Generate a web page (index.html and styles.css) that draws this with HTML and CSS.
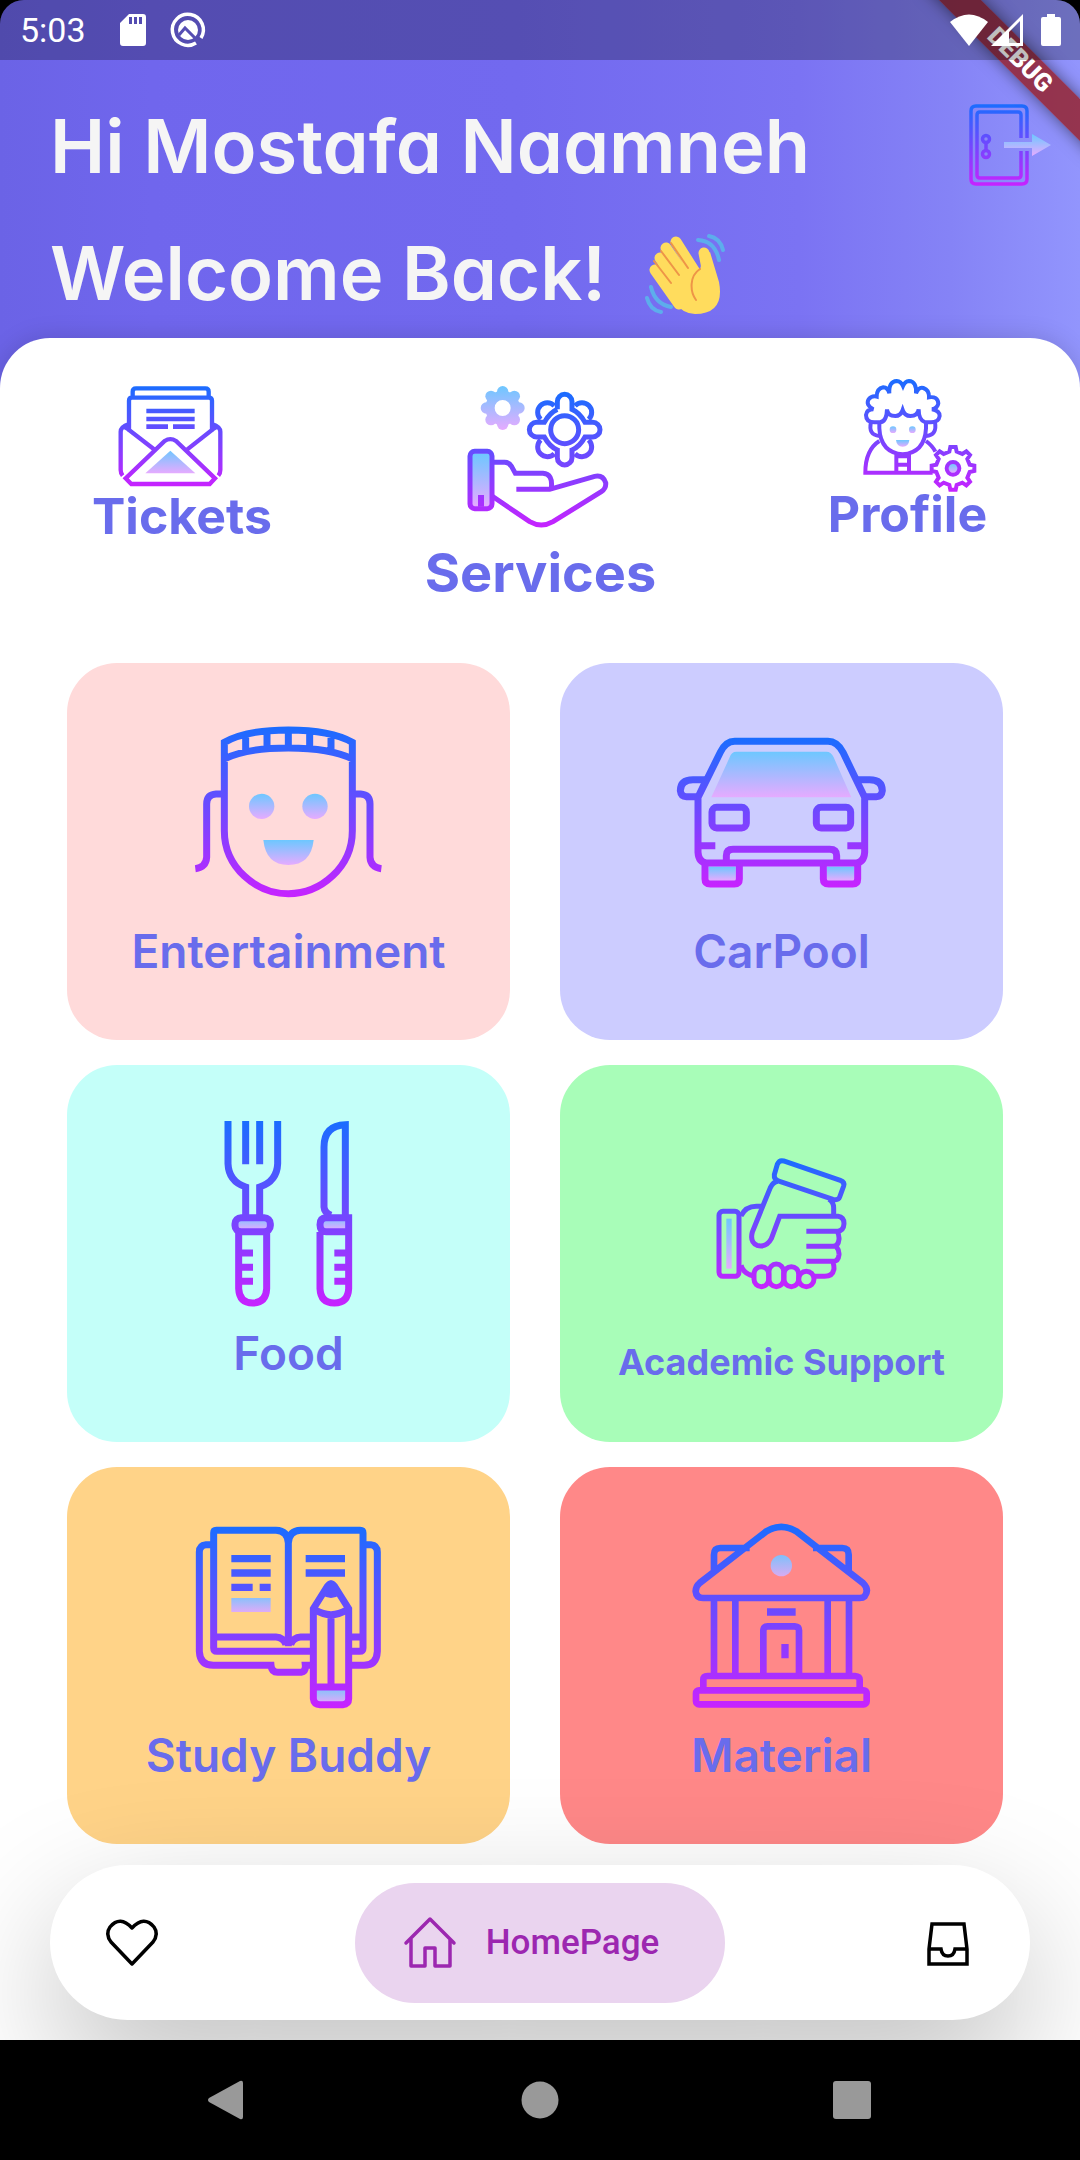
FILE: index.html
```
<!DOCTYPE html>
<html lang="en">
<head>
<meta charset="utf-8">
<meta name="viewport" content="width=device-width, initial-scale=1">
<title>Home</title>
<link rel="stylesheet" href="styles.css">
</head>
<body>
<div class="screen">
  <div class="status-bar">
    <div class="status-group">
      <span class="clock">5:03</span>
      <svg class="sd" width="28" height="34" viewBox="0 0 28 34"><path fill="#fff" fill-rule="evenodd" d="M10 1H24Q27 1 27 4V30Q27 33 24 33H4Q1 33 1 30V10ZM10 4V11H13V4ZM15 4V11H18V4ZM20 4V11H23V4Z"/></svg>
      <svg width="36" height="36" viewBox="0 0 36 36"><path d="M26 31A15.500 15.500 0 1 1 31 26" fill="none" stroke="#fff" stroke-width="3.500"/><circle cx="18" cy="18" r="10" fill="#fff"/><path d="M9 23L15 16L30 31" fill="none" stroke="#564eb3" stroke-width="3"/></svg>
    </div>
    <div class="status-group">
      <svg width="38" height="32" viewBox="0 0 38 32"><path fill="#fff" d="M0 8Q19 -7 38 8L19 32Z"/></svg>
      <svg class="signal" width="32" height="32" viewBox="0 0 32 32"><path fill="#fff" fill-rule="evenodd" d="M0 32L32 0V32ZM18 18V29H29V7Z"/></svg>
      <svg width="20" height="32" viewBox="0 0 20 32"><path fill="#fff" d="M6 0H14V3H18Q20 3 20 5V30Q20 32 18 32H2Q0 32 0 30V5Q0 3 2 3H6Z"/></svg>
    </div>
  </div>
  <div class="debug-banner">DEBUG</div>

  <header class="hero">
    <h1 class="greeting">
      <span class="line">Hi Mostafa Naamneh</span>
      <span class="line">Welcome Back!
        <svg class="wave" width="80" height="80" viewBox="0 0 80 80" aria-hidden="true">
          <g stroke="#ffdc5d" stroke-width="11" stroke-linecap="round"><path d="M31 8L50 38M21 14L44 48M15 24L38 58M10 36L34 70M59 19L64 45"/></g>
          <path fill="#ffdc5d" d="M40 28L55 36L58 22L65 18L74 48Q80 80 50 80Q38 80 28 67L18 46Z"/>
          <g fill="none" stroke="#ee9547" stroke-width="2" stroke-linecap="round"><path d="M26 9L43 34M16 17L34 41M9 27L26 49M55 35C44 42 45 58 51 66"/></g>
          <g fill="none" stroke="#5dadec" stroke-width="4" stroke-linecap="round"><path d="M64 2Q75 4 78 16M53 6Q70 7 74 26M6 53Q10 70 26 73M2 64Q5 76 16 78"/></g>
        </svg>
      </span>
    </h1>
    <button class="logout" aria-label="Log out">
      <svg width="88" height="90" viewBox="0 0 88 90">
        <defs>
          <linearGradient id="door-line" gradientUnits="userSpaceOnUse" x1="0" y1="4" x2="0" y2="86"><stop offset="0" stop-color="#1a6dff"/><stop offset="1" stop-color="#c822ff"/></linearGradient>
          <linearGradient id="door-fill" gradientUnits="userSpaceOnUse" x1="0" y1="34" x2="0" y2="56"><stop offset="0" stop-color="#6dc7ff"/><stop offset="1" stop-color="#e6abff"/></linearGradient>
        </defs>
        <g fill="none" stroke="url(#door-line)" stroke-width="3.500"><path d="M61 38V11Q61 6 56 6H10Q5 6 5 11V79Q5 84 10 84H56Q61 84 61 79V51M55 38V15Q55 12 52 12H14Q11 12 11 15V75Q11 78 14 78H52Q55 78 55 75V51"/><circle cx="20" cy="39" r="3.500"/><circle cx="20" cy="54" r="3.500"/><path d="M20 42V51"/></g>
        <path fill="url(#door-fill)" d="M38 42H66V34L85 45L66 56V48H38Z"/>
      </svg>
    </button>
  </header>

  <main class="sheet">
    <nav class="quick" aria-label="Shortcuts">
      <a class="quick-link" href="#tickets">
        <svg width="177" height="105" viewBox="105 63 531 315">
          <defs>
            <linearGradient id="tk-line" gradientUnits="userSpaceOnUse" x1="0" y1="78" x2="0" y2="380"><stop offset="0" stop-color="#1a6dff"/><stop offset="1" stop-color="#c822ff"/></linearGradient>
            <linearGradient id="tk-fill" gradientUnits="userSpaceOnUse" x1="0" y1="270" x2="0" y2="340"><stop offset="0" stop-color="#6dc7ff"/><stop offset="1" stop-color="#e6abff"/></linearGradient>
          </defs>
          <g fill="none" stroke="url(#tk-line)" stroke-width="13"><path d="M224 112V95Q224 85 234 85H442Q452 85 452 95V112M288 268L213 210V122Q213 113 222 113H452Q462 113 462 122V210L388 268M213 192Q188 200 188 215V330Q188 340 194 347M462 192Q487 200 487 215V330Q487 340 481 347M203 355L320 243Q337 232 354 243L471 355L455 372H220Z"/></g>
          <path fill="url(#tk-line)" d="M265 146H410V160H265ZM265 170H410V184H265ZM265 193H330V207H265ZM345 193H410V207H345ZM213 186L190 203L213 216ZM462 186L485 203L462 216Z"/>
          <path fill="url(#tk-fill)" d="M337 272L412 340H262Z"/>
        </svg>
        <span class="quick-label">Tickets</span>
      </a>
      <a class="quick-link current" href="#services">
        <svg width="230" height="160" viewBox="69 63 690 480">
          <defs>
            <linearGradient id="sv-line" gradientUnits="userSpaceOnUse" x1="0" y1="97" x2="0" y2="505"><stop offset="0" stop-color="#1a6dff"/><stop offset="1" stop-color="#c822ff"/></linearGradient>
            <linearGradient id="sv-gear" gradientUnits="userSpaceOnUse" x1="0" y1="78" x2="0" y2="210"><stop offset="0" stop-color="#6dc7ff"/><stop offset="1" stop-color="#e6abff"/></linearGradient>
            <linearGradient id="sv-cuff" gradientUnits="userSpaceOnUse" x1="0" y1="280" x2="0" y2="440"><stop offset="0" stop-color="#6dc7ff"/><stop offset="1" stop-color="#e6abff"/></linearGradient>
          </defs>
          <circle cx="299" cy="144" r="38" fill="none" stroke="url(#sv-gear)" stroke-width="28"/>
          <g fill="url(#sv-gear)"><circle cx="299" cy="95" r="17"/><circle cx="299" cy="193" r="17"/><circle cx="250" cy="144" r="17"/><circle cx="348" cy="144" r="17"/><circle cx="264" cy="109" r="17"/><circle cx="334" cy="109" r="17"/><circle cx="264" cy="179" r="17"/><circle cx="334" cy="179" r="17"/></g>
          <rect x="207" y="280" width="54" height="160" fill="url(#sv-cuff)"/>
          <g fill="none" stroke="url(#sv-line)" stroke-width="15">
            <circle cx="485" cy="209" r="42"/>
            <path d="M463 148V125A22 22 0 0 1 507 125V148Q530 158 546 187H569A22 22 0 0 1 569 231H546Q530 260 507 270V293A22 22 0 0 1 463 293V270Q440 260 424 231H401A22 22 0 0 1 401 187H424Q440 158 463 148"/>
            <path d="M516 137A29 29 0 1 1 557 178M516 281A29 29 0 1 0 557 240M454 281A29 29 0 1 1 413 240M454 137A29 29 0 1 0 413 178"/>
            <rect x="201" y="274" width="66" height="172" rx="14"/>
            <path stroke-width="18" d="M234 405V440"/>
            <path d="M267 307H305Q318 307 326 320L337 340H420Q450 342 445 384M340 388H440L575 349Q600 344 608 368Q610 385 595 395L450 485Q415 505 380 485L267 408"/>
          </g>
        </svg>
        <span class="quick-label">Services</span>
      </a>
      <a class="quick-link" href="#profile">
        <svg width="163" height="103" viewBox="200 63 489 309">
          <defs>
            <linearGradient id="pf-line" gradientUnits="userSpaceOnUse" x1="0" y1="58" x2="0" y2="397"><stop offset="0" stop-color="#1a6dff"/><stop offset="1" stop-color="#c822ff"/></linearGradient>
            <linearGradient id="pf-fill" x1="0" y1="0" x2="0" y2="1"><stop offset="0" stop-color="#6dc7ff"/><stop offset="1" stop-color="#e6abff"/></linearGradient>
          </defs>
          <g fill="url(#pf-fill)"><circle cx="401" cy="209" r="10"/><circle cx="459" cy="209" r="10"/><path d="M410 240H450Q448 260 430 260Q412 260 410 240Z"/><circle cx="581" cy="325" r="14"/></g>
          <g fill="none" stroke="url(#pf-line)" stroke-width="12">
            <path d="M362 187H345Q320 187 320 165Q322 148 342 148Q318 135 328 118Q338 106 352 110Q352 86 372 82Q385 82 390 100Q388 64 412 63Q425 64 431 78Q437 64 449 63Q472 64 470 100Q478 80 492 84Q510 90 509 112Q535 108 537 130Q535 145 518 148Q541 152 541 168Q538 187 515 187H498Q478 182 478 148Q475 168 453 168Q436 168 430 150Q424 168 408 168Q385 168 383 148Q382 185 362 187Z"/>
            <path d="M360 187V205Q364 278 430 283Q496 278 500 205V187M335 187Q326 225 360 228M527 187Q534 225 500 228M360 243Q318 270 318 338H520M500 243Q520 258 528 275M411 283V338M449 283V338M411 289H449M411 314H449"/>
            <path d="M570 275L573 261H589L592 275 609 282 621 274 632 285 624 297 631 314 645 317V333L631 336 624 353 632 365 621 376 609 368 592 375 589 389H573L570 375 553 368 541 376 530 365 538 353 531 336 517 333V317L531 314 538 297 530 285 541 274 553 282Z"/>
            <circle cx="581" cy="325" r="19"/>
          </g>
        </svg>
        <span class="quick-label">Profile</span>
      </a>
    </nav>

    <section class="cards" aria-label="Services">
      <button class="card entertainment">
        <svg width="213" height="200" viewBox="368 187 639 600">
          <defs>
            <linearGradient id="en-line" gradientUnits="userSpaceOnUse" x1="0" y1="225" x2="0" y2="743"><stop offset="0" stop-color="#1a6dff"/><stop offset="1" stop-color="#c822ff"/></linearGradient>
            <linearGradient id="en-fill" x1="0" y1="0" x2="0" y2="1"><stop offset="0" stop-color="#6dc7ff"/><stop offset="1" stop-color="#e6abff"/></linearGradient>
          </defs>
          <g fill="none" stroke="url(#en-line)" stroke-width="21"><path d="M495 340V275Q560 238 687 238Q814 238 879 275V540C879 650 784 729 687 729C590 729 495 650 495 540V325Q560 292 687 292Q814 292 879 325M559 250V302M623 242V296M687 238V292M751 242V296M815 250V302M487 430H470Q442 432 442 460V620Q440 650 408 654M887 430H904Q932 432 932 460V620Q934 650 966 654"/></g>
          <g fill="url(#en-fill)"><circle cx="607" cy="467" r="38"/><circle cx="767" cy="467" r="38"/><path d="M612 568H763Q755 643 687 643Q620 643 612 568Z"/></g>
        </svg>
        <span class="card-label">Entertainment</span>
      </button>
      <button class="card carpool">
        <svg width="213" height="200" viewBox="376 187 639 600">
          <defs>
            <linearGradient id="cp-line" gradientUnits="userSpaceOnUse" x1="0" y1="262" x2="0" y2="710"><stop offset="0" stop-color="#1a6dff"/><stop offset="1" stop-color="#c822ff"/></linearGradient>
            <linearGradient id="cp-fill" x1="0" y1="0" x2="0" y2="1"><stop offset="0" stop-color="#6dc7ff"/><stop offset="1" stop-color="#e6abff"/></linearGradient>
          </defs>
          <g fill="url(#cp-fill)"><path d="M560 303H830Q845 303 852 320L905 440H485L540 320Q545 303 560 303Z"/><rect x="477" y="648" width="81" height="42"/><rect x="832" y="648" width="81" height="42"/></g>
          <g fill="none" stroke="url(#cp-line)" stroke-width="21">
            <path d="M470 387L445 440V605Q447 635 470 637H920Q943 635 945 605V440L880 305Q862 272 835 272H555Q528 272 512 305L445 440"/>
            <path d="M470 387H430Q392 387 392 420Q394 438 410 438H445M920 387H960Q998 387 998 420Q996 438 980 438H945M450 585H497M893 585H940M530 635V615Q530 596 550 596H840Q861 596 861 615V635M466 640V685Q466 700 482 700H554Q569 700 569 685V640M821 640V685Q821 700 837 700H909Q924 700 924 685V640"/>
            <rect x="487" y="470" width="103" height="62" rx="14"/><rect x="800" y="470" width="103" height="62" rx="14"/>
          </g>
        </svg>
        <span class="card-label">CarPool</span>
      </button>
      <button class="card food">
        <svg width="213" height="200" viewBox="368 179 639 600">
          <defs>
            <linearGradient id="fd-line" gradientUnits="userSpaceOnUse" x1="0" y1="197" x2="0" y2="755"><stop offset="0" stop-color="#1a6dff"/><stop offset="1" stop-color="#c822ff"/></linearGradient>
            <linearGradient id="fd-fill" gradientUnits="userSpaceOnUse" x1="0" y1="480" x2="0" y2="525"><stop offset="0" stop-color="#6dc7ff"/><stop offset="1" stop-color="#e6abff"/></linearGradient>
          </defs>
          <path fill="url(#fd-fill)" d="M530 490H630V526H530ZM785 490H862V526H785Z"/>
          <g fill="none" stroke="url(#fd-line)" stroke-width="21">
            <path d="M506 197V325Q508 378 559 395V480M655 197V325Q653 378 601 395V480M559 197V327M601 197V327M538 530V700Q540 743 580 743Q620 743 622 700V530M545 593H581M545 636H581M545 678H581"/>
            <rect x="527" y="487" width="106" height="42" rx="18"/>
            <path d="M858 480V208Q794 210 794 275V455Q795 472 815 480M868 487H800Q782 487 782 508Q782 529 800 529H868M868 477V700Q866 743 825 743Q784 743 782 700V530M825 593H862M825 636H862M825 678H862"/>
          </g>
        </svg>
        <span class="card-label">Food</span>
      </button>
      <button class="card academic">
        <svg width="213" height="200" viewBox="376 179 639 600">
          <defs>
            <linearGradient id="ac-line" gradientUnits="userSpaceOnUse" x1="0" y1="308" x2="0" y2="703"><stop offset="0" stop-color="#1a6dff"/><stop offset="1" stop-color="#c822ff"/></linearGradient>
            <linearGradient id="ac-fill" x1="0" y1="0" x2="0" y2="1"><stop offset="0" stop-color="#6dc7ff"/><stop offset="1" stop-color="#e6abff"/></linearGradient>
          </defs>
          <rect x="530" y="490" width="16" height="150" fill="url(#ac-fill)"/>
          <g fill="none" stroke="url(#ac-line)" stroke-width="15">
            <rect x="508" y="468" width="60" height="195" rx="12"/>
            <path d="M574 482Q588 453 620 453H635M574 630Q582 656 612 662"/>
            <path d="M674 358L683 327Q689 313 702 317L872 375Q886 380 882 392L870 425Q866 436 850 432L690 378Q672 374 674 358Z"/>
            <path d="M685 378Q670 380 662 397L608 530Q600 560 622 570Q650 578 665 550L690 483H865Q883 485 883 505Q882 525 865 528H770M852 481V457Q852 442 838 432M862 528Q869 537 868 552Q866 573 850 573H770M860 574Q869 585 868 598Q866 618 850 618H770M850 620Q853 630 853 640Q850 663 825 663H795"/>
            <rect x="613" y="634" width="44" height="60" rx="22"/><rect x="658" y="626" width="44" height="68" rx="22"/><rect x="703" y="634" width="44" height="60" rx="22"/><circle cx="770" cy="671" r="23"/>
          </g>
        </svg>
        <span class="card-label">Academic Support</span>
      </button>
      <button class="card study">
        <svg width="213" height="200" viewBox="368 187 639 600">
          <defs>
            <linearGradient id="st-line" gradientUnits="userSpaceOnUse" x1="0" y1="215" x2="0" y2="760"><stop offset="0" stop-color="#1a6dff"/><stop offset="1" stop-color="#c822ff"/></linearGradient>
            <linearGradient id="st-fill" x1="0" y1="0" x2="0" y2="1"><stop offset="0" stop-color="#8bc0fb"/><stop offset="1" stop-color="#deabf8"/></linearGradient>
          </defs>
          <g fill="url(#st-fill)"><rect x="516" y="430" width="118" height="42"/><rect x="770" y="706" width="90" height="38"/></g>
          <g fill="none" stroke="url(#st-line)" stroke-width="21">
            <path d="M687 575V265Q685 228 650 227H471Q463 227 463 235V580Q463 590 473 590H755M687 265Q689 228 724 227H902Q911 227 911 235V580Q911 590 901 590H878M463 547H650Q672 548 680 570M694 570Q702 548 724 547H755M878 547H911M455 270H440Q420 272 420 292V590Q422 632 462 632H635Q637 653 655 653H725Q740 650 738 632H755M920 270H934Q954 272 954 292V590Q952 632 914 632H878"/>
            <path d="M762 462V732Q764 750 782 750H850Q868 748 868 732V462L825 394Q815 380 805 394ZM768 466Q815 494 862 466M815 485V690M762 697H868"/>
          </g>
          <path fill="url(#st-line)" d="M516 301H634V323H516ZM516 344H634V366H516ZM516 387H580V409H516ZM601 387H634V409H601ZM739 301H857V323H739ZM739 344H857V366H739ZM815 376L842 420Q815 440 788 420Z"/>
        </svg>
        <span class="card-label">Study Buddy</span>
      </button>
      <button class="card material">
        <svg width="213" height="200" viewBox="376 187 639 600">
          <defs>
            <linearGradient id="mt-line" gradientUnits="userSpaceOnUse" x1="0" y1="205" x2="0" y2="760"><stop offset="0" stop-color="#1a6dff"/><stop offset="1" stop-color="#c822ff"/></linearGradient>
            <linearGradient id="mt-fill" x1="0" y1="0" x2="0" y2="1"><stop offset="0" stop-color="#7fc0fb"/><stop offset="1" stop-color="#d8abf2"/></linearGradient>
          </defs>
          <circle cx="695" cy="333" r="32" fill="url(#mt-fill)"/>
          <g fill="none" stroke="url(#mt-line)" stroke-width="20">
            <path d="M450 385L650 230Q695 203 740 230L940 385Q960 405 945 425Q940 430 930 430H460Q440 430 438 410Q438 395 450 385ZM493 355V300Q493 280 512 280H600M897 355V300Q897 280 878 280H790M493 435V660M557 435V660M834 435V660M898 435V660M641 660V527Q642 515 654 515H735Q748 516 748 527V660M461 705V675Q461 664 474 664H916Q930 665 930 675V705"/>
            <rect x="439" y="707" width="512" height="42" rx="9"/>
          </g>
          <path fill="url(#mt-line)" d="M652 461H738V483H652ZM695 568H717V611H695Z"/>
        </svg>
        <span class="card-label">Material</span>
      </button>
    </section>

    <nav class="tab-bar" aria-label="Main">
      <button class="tab" aria-label="Favourites">
        <svg width="60" height="60" viewBox="0 0 60 60"><path fill="none" stroke="#000" stroke-width="3.500" stroke-linejoin="round" d="M30 51L9 29Q3 21 8 14Q18 2 30 15Q42 2 52 14Q57 21 51 29Z"/></svg>
      </button>
      <button class="tab active">
        <svg width="60" height="60" viewBox="0 0 60 60"><path fill="none" stroke="#9c27b0" stroke-width="3.500" stroke-linejoin="round" stroke-linecap="round" d="M6 30L30 6L54 30M11 26V53H25V35H35V53H50V26"/></svg>
        <span>HomePage</span>
      </button>
      <button class="tab" aria-label="Inbox">
        <svg width="60" height="60" viewBox="0 0 60 60"><path fill="none" stroke="#000" stroke-width="3.500" d="M14 11H46L49 36V51H11V36ZM11 36H23Q24 43 30 43Q36 43 37 36H49"/></svg>
      </button>
    </nav>
  </main>

  <div class="system-bar">
    <button class="system-key" aria-label="Back"><svg width="40" height="40" viewBox="0 0 40 40"><path fill="#999" d="M1 22Q-1 20 1 18L32 1Q35 0 35 3V37Q35 40 32 39Z"/></svg></button>
    <button class="system-key" aria-label="Home"><svg width="40" height="40" viewBox="0 0 40 40"><circle cx="20" cy="20" r="18.500" fill="#999"/></svg></button>
    <button class="system-key" aria-label="Recent apps"><svg width="40" height="40" viewBox="0 0 40 40"><rect x="1" y="1" width="38" height="38" rx="3" fill="#999"/></svg></button>
  </div>
</div>
</body>
</html>
```
FILE: styles.css
```
* {
  box-sizing: border-box;
}

body {
  margin: 0;
  background: #000;
  font-family: Inter, "Noto Sans", sans-serif;
}

button {
  margin: 0;
  padding: 0;
  border: 0;
  background: none;
  color: inherit;
  font: inherit;
}

svg {
  display: block;
  flex: none;
  overflow: visible;
}

.screen {
  position: relative;
  display: flex;
  flex-direction: column;
  min-height: 100vh;
  overflow: hidden;
  border-radius: 24px 24px 0 0;
  background: linear-gradient(90deg, #6b63e6 0, #7066ed 14%, #7269ef 48%, #7b73f3 74%, #8583f6 88%, #9295fd 100%);
}

/* Translucent system bar drawn over the top of the app */
.status-bar {
  position: absolute;
  z-index: 3;
  top: 0;
  left: 0;
  right: 0;
  display: flex;
  align-items: center;
  justify-content: space-between;
  height: 60px;
  padding: 0 19px 0 20px;
  background: rgba(0, 0, 0, 0.25);
  color: #fff;
}

.status-group {
  display: flex;
  align-items: center;
}

.clock {
  font: 400 34px/40px Roboto, sans-serif;
}

.sd {
  margin: 0 23px 0 33px;
}

.signal {
  margin: 0 18px 0 3px;
}

.debug-banner {
  position: absolute;
  z-index: 2;
  top: 45px;
  right: -60px;
  width: 240px;
  background: rgba(150, 20, 20, 0.75);
  box-shadow: 0 0 16px rgba(0, 0, 0, 0.5);
  color: #fff;
  font: 900 25px/30px Roboto, sans-serif;
  text-align: center;
  transform: rotate(45deg);
}

.hero {
  display: flex;
  align-items: flex-start;
  justify-content: space-between;
  padding: 83px 26px 1px 50px;
}

.greeting {
  margin: 0;
  color: #f5f5f5;
  font-size: 74px;
  font-weight: 600;
  line-height: 127px;
  font-feature-settings: "cv11";
}

.line {
  display: flex;
  align-items: center;
}

.wave {
  margin-left: 39px;
}

.logout {
  margin-top: 17px;
}

.sheet {
  position: relative;
  flex: 1;
  overflow: hidden;
  padding-bottom: 19px;
  border-radius: 50px 50px 0 0;
  background: #fff;
  box-shadow: 0 0 24px rgba(0, 0, 0, 0.15);
}

.quick {
  display: grid;
  grid-template-columns: 1fr auto 1fr;
  align-items: start;
  padding: 43px 91px 58px 92px;
}

.quick-link {
  display: flex;
  flex-direction: column;
  align-items: center;
  justify-self: start;
  color: #696cec;
  font-size: 50px;
  font-weight: 700;
  line-height: 60px;
  text-decoration: none;
}

.quick-link:last-child {
  justify-self: end;
}

.quick-link.current {
  font-size: 54px;
  line-height: 64px;
}

.cards {
  display: grid;
  grid-template-columns: 1fr 1fr;
  grid-auto-rows: 377px;
  gap: 25px 50px;
  padding: 0 77px 0 67px;
}

.card {
  display: flex;
  flex-direction: column;
  align-items: center;
  justify-content: flex-start;
  gap: 10px;
  padding-top: 50px;
  border-radius: 50px;
  color: #696cec;
  font-size: 46px;
  font-weight: 600;
  line-height: 56px;
  white-space: nowrap;
}

.entertainment { background: #ffdada; }
.carpool { background: #ccccff; }
.food { background: #c4fff9; }
.study { background: #ffd388; }
.material { background: #ff8888; }

.academic {
  gap: 19px;
  background: #a8fdb8;
  font-size: 36px;
  font-weight: 700;
}

.tab-bar {
  position: relative;
  display: flex;
  align-items: center;
  justify-content: space-between;
  height: 155px;
  margin: 21px 50px 0;
  padding: 0 52px;
  border-radius: 78px;
  background: #fff;
  box-shadow: 0 50px 130px rgba(0, 0, 0, 0.25);
}

.tab.active {
  display: flex;
  align-items: center;
  gap: 26px;
  height: 120px;
  padding: 0 66px 0 45px;
  border-radius: 60px;
  background: #ead4ef;
  color: #9c27b0;
  font: 500 35px/40px Roboto, sans-serif;
}

.system-bar {
  position: relative;
  display: grid;
  grid-template-columns: repeat(3, 1fr);
  align-items: center;
  justify-items: center;
  height: 120px;
  padding: 0 72px;
  background: #000;
}
```
